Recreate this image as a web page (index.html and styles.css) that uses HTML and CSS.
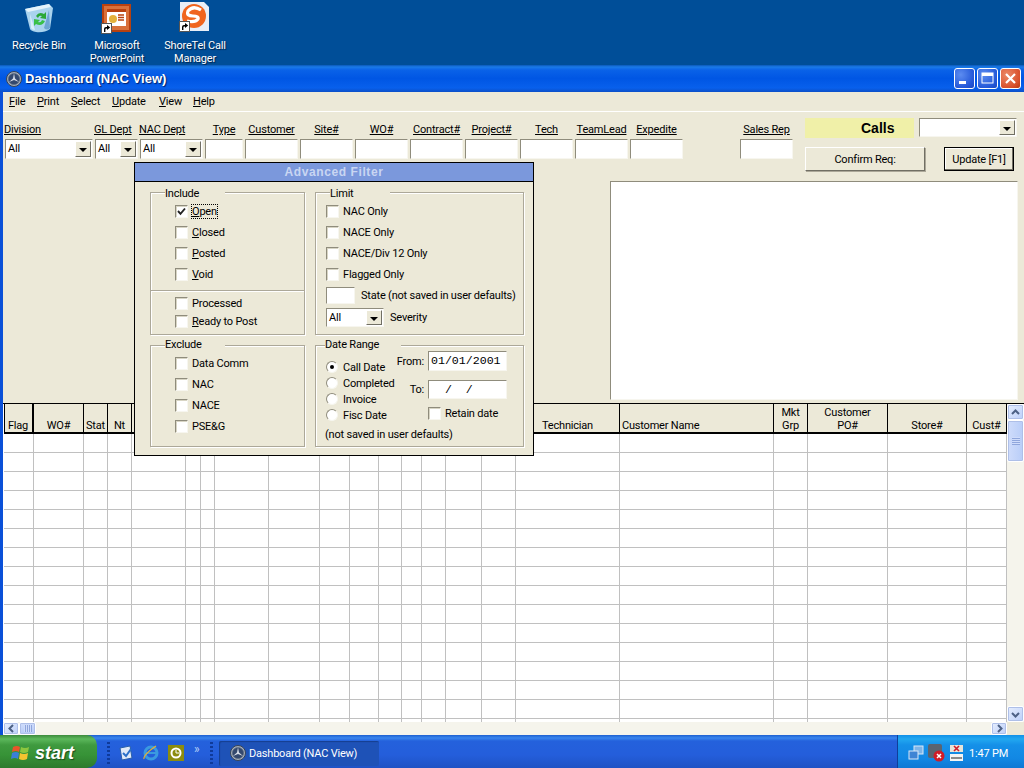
FILE: index.html
```html
<!DOCTYPE html>
<html lang="en">
<head>
    <meta charset="UTF-8">
    <meta name="viewport" content="width=device-width, initial-scale=1.0">
    <title>Dashboard (NAC View)</title>
    <link rel="stylesheet" href="styles.css">
</head>
<body>

    <svg class="defs" width="0" height="0">
        <symbol id="star" viewBox="0 0 16 16">
            <circle cx="8" cy="8" r="7.5" fill="#a4aebc" stroke="#364254"/>
            <circle cx="8" cy="8" r="5.6" fill="#33486e" stroke="#566478" stroke-width=".6"/>
            <path d="M8 2.2 L9 7.4 L13 11 L8 9.1 L3 11 L7 7.4 Z" fill="#d4dbe6"/>
        </symbol>
        <symbol id="shortcut" viewBox="0 0 11 11">
            <rect width="11" height="11" fill="#fff"/>
            <rect x=".5" y=".5" width="10" height="10" fill="none" stroke="#555"/>
            <path d="M3 9 V6 Q3 4 5 4 H6 V2 L9.2 4.6 L6 7 V5.4 H5.2 Q4.4 5.4 4.4 6.4 V9 Z" fill="#000"/>
        </symbol>
    </svg>

    <!-- desktop icons -->
    <div class="desk-icon icon-bin">
        <svg width="30" height="32" viewBox="0 0 30 32">
            <path d="M1 7 L25 2 L29 6 L26 27 Q20 31 12 30 Q7 29 6 27 Z" fill="#a9d3ee"/>
            <path d="M1 7 L25 2 L27 5 L4 10 Z" fill="#e4f3fb"/>
            <path d="M6 12 L11 28 Q8 28 7 26 Z" fill="#d8eef9"/>
            <path d="M20 26 L25 8 L26 26 Q23 29 20 26 Z" fill="#6da5d4"/>
            <path d="M12 14 Q15 9 20 12 L22 10 L22 17 L16 16 L18 14 Q15 13 14 16 Z" fill="#2aa838"/>
            <path d="M21 19 Q18 25 12 22 L10 24 L10 17 L16 18 L14 20 Q17 21 18 18 Z" fill="#38c048"/>
        </svg>
        <span>Recycle Bin</span>
    </div>
    <div class="desk-icon icon-ppt">
        <span class="icon-box">
            <svg width="30" height="30" viewBox="0 0 30 30">
                <rect width="29" height="28" x="0" y="0" fill="#b8410f"/>
                <rect width="25" height="24" x="2" y="2" fill="#d8703a"/>
                <rect width="19" height="17" x="5" y="5" fill="#fff"/>
                <rect width="19" height="3" x="5" y="5" fill="#b8410f"/>
                <circle cx="11" cy="15" r="4" fill="#e4b23c"/>
                <path d="M16 11 h6 M16 13.5 h6 M16 16 h6" stroke="#b8410f" stroke-width="1.4"/>
            </svg>
            <svg class="arrow" width="11" height="11"><use href="#shortcut"/></svg>
        </span>
        <span>Microsoft PowerPoint</span>
    </div>
    <div class="desk-icon icon-shore">
        <span class="icon-box">
            <svg width="30" height="30" viewBox="0 0 30 30">
                <path d="M0 0 H24 L29 5 V29 H0 Z" fill="#e8eef8"/>
                <circle cx="14" cy="14" r="12" fill="#f0641e"/>
                <path d="M21 8 Q13 3 8 9 Q6 14 13 14 Q19 14 18 17 Q15 21 7 19" fill="none" stroke="#fff" stroke-width="3.2"/>
            </svg>
            <svg class="arrow" width="11" height="11"><use href="#shortcut"/></svg>
        </span>
        <span>ShoreTel Call Manager</span>
    </div>

    <!-- main window -->
    <div class="window">
        <div class="titlebar">
            <svg class="title-icon" width="16" height="16"><use href="#star"/></svg>
            <span class="title-text">Dashboard (NAC View)</span>
            <div class="title-buttons">
                <span class="win-btn"><svg width="19" height="19" viewBox="0 0 19 19"><rect x="4" y="12" width="7" height="3" fill="#fff"/></svg></span>
                <span class="win-btn"><svg width="19" height="19" viewBox="0 0 19 19"><rect x="4" y="4" width="11" height="10" fill="none" stroke="#fff"/><rect x="4" y="4" width="11" height="3" fill="#fff"/></svg></span>
                <span class="win-btn win-close"><svg width="19" height="19" viewBox="0 0 19 19"><path d="M5 5 L14 14 M14 5 L5 14" stroke="#fff" stroke-width="2.2"/></svg></span>
            </div>
        </div>

        <div class="menubar">
            <span class="m-file"><u>F</u>ile</span>
            <span class="m-print"><u>P</u>rint</span>
            <span class="m-select"><u>S</u>elect</span>
            <span class="m-update"><u>U</u>pdate</span>
            <span class="m-view"><u>V</u>iew</span>
            <span><u>H</u>elp</span>
        </div>

        <div class="toolbar">
            <div class="fields">
                <div class="field w-division">
                    <label class="left">Division</label>
                    <span class="combo"><span class="combo-text">All</span><span class="drop"></span></span>
                </div>
                <div class="field w-gl">
                    <label class="left">GL Dept</label>
                    <span class="combo"><span class="combo-text">All</span><span class="drop"></span></span>
                </div>
                <div class="field w-nac">
                    <label class="left">NAC Dept</label>
                    <span class="combo"><span class="combo-text">All</span><span class="drop"></span></span>
                </div>
                <div class="field w-type"><label>Type</label><span class="textbox"></span></div>
                <div class="field"><label>Customer</label><span class="textbox"></span></div>
                <div class="field"><label>Site#</label><span class="textbox"></span></div>
                <div class="field"><label>WO#</label><span class="textbox"></span></div>
                <div class="field"><label>Contract#</label><span class="textbox"></span></div>
                <div class="field"><label>Project#</label><span class="textbox"></span></div>
                <div class="field"><label>Tech</label><span class="textbox"></span></div>
                <div class="field"><label>TeamLead</label><span class="textbox"></span></div>
                <div class="field"><label>Expedite</label><span class="textbox"></span></div>
                <div class="field sales"><label>Sales Rep</label><span class="textbox"></span></div>
            </div>
            <div class="side">
                <div class="side-row">
                    <div class="calls">Calls</div>
                    <span class="combo combo-calls"><span class="combo-text"></span><span class="drop"></span></span>
                </div>
                <div class="side-row side-buttons">
                    <button class="btn btn-confirm">Confirm Req:</button>
                    <button class="btn btn-update">Update [F1]</button>
                </div>
            </div>
        </div>

        <div class="memo-row">
            <div class="memo"></div>
        </div>

        <div class="grid-area">
            <div class="grid-wrap">
                <table class="grid">
                    <colgroup>
                        <col width="30"><col width="50"><col width="24"><col width="24"><col width="54"><col width="15"><col width="14"><col width="54"><col width="51"><col width="30"><col width="29"><col width="23"><col width="20"><col width="24"><col width="36"><col width="34"><col width="104"><col width="154"><col width="34"><col width="80"><col width="79"><col width="40">
                    </colgroup>
                    <thead>
                        <tr>
                            <th class="thick">Flag</th><th>WO#</th><th>Stat</th><th>Nt</th><th></th><th></th><th></th><th></th><th></th><th></th><th></th><th></th><th></th><th></th><th></th><th></th><th>Technician</th><th class="to-left">Customer Name</th><th>Mkt<br>Grp</th><th>Customer<br>PO#</th><th>Store#</th><th>Cust#</th>
                        </tr>
                    </thead>
                    <tbody>
                        <tr><td></td><td></td><td></td><td></td><td></td><td></td><td></td><td></td><td></td><td></td><td></td><td></td><td></td><td></td><td></td><td></td><td></td><td></td><td></td><td></td><td></td><td></td></tr>
                        <tr><td></td><td></td><td></td><td></td><td></td><td></td><td></td><td></td><td></td><td></td><td></td><td></td><td></td><td></td><td></td><td></td><td></td><td></td><td></td><td></td><td></td><td></td></tr>
                        <tr><td></td><td></td><td></td><td></td><td></td><td></td><td></td><td></td><td></td><td></td><td></td><td></td><td></td><td></td><td></td><td></td><td></td><td></td><td></td><td></td><td></td><td></td></tr>
                        <tr><td></td><td></td><td></td><td></td><td></td><td></td><td></td><td></td><td></td><td></td><td></td><td></td><td></td><td></td><td></td><td></td><td></td><td></td><td></td><td></td><td></td><td></td></tr>
                        <tr><td></td><td></td><td></td><td></td><td></td><td></td><td></td><td></td><td></td><td></td><td></td><td></td><td></td><td></td><td></td><td></td><td></td><td></td><td></td><td></td><td></td><td></td></tr>
                        <tr><td></td><td></td><td></td><td></td><td></td><td></td><td></td><td></td><td></td><td></td><td></td><td></td><td></td><td></td><td></td><td></td><td></td><td></td><td></td><td></td><td></td><td></td></tr>
                        <tr><td></td><td></td><td></td><td></td><td></td><td></td><td></td><td></td><td></td><td></td><td></td><td></td><td></td><td></td><td></td><td></td><td></td><td></td><td></td><td></td><td></td><td></td></tr>
                        <tr><td></td><td></td><td></td><td></td><td></td><td></td><td></td><td></td><td></td><td></td><td></td><td></td><td></td><td></td><td></td><td></td><td></td><td></td><td></td><td></td><td></td><td></td></tr>
                        <tr><td></td><td></td><td></td><td></td><td></td><td></td><td></td><td></td><td></td><td></td><td></td><td></td><td></td><td></td><td></td><td></td><td></td><td></td><td></td><td></td><td></td><td></td></tr>
                        <tr><td></td><td></td><td></td><td></td><td></td><td></td><td></td><td></td><td></td><td></td><td></td><td></td><td></td><td></td><td></td><td></td><td></td><td></td><td></td><td></td><td></td><td></td></tr>
                        <tr><td></td><td></td><td></td><td></td><td></td><td></td><td></td><td></td><td></td><td></td><td></td><td></td><td></td><td></td><td></td><td></td><td></td><td></td><td></td><td></td><td></td><td></td></tr>
                        <tr><td></td><td></td><td></td><td></td><td></td><td></td><td></td><td></td><td></td><td></td><td></td><td></td><td></td><td></td><td></td><td></td><td></td><td></td><td></td><td></td><td></td><td></td></tr>
                        <tr><td></td><td></td><td></td><td></td><td></td><td></td><td></td><td></td><td></td><td></td><td></td><td></td><td></td><td></td><td></td><td></td><td></td><td></td><td></td><td></td><td></td><td></td></tr>
                        <tr><td></td><td></td><td></td><td></td><td></td><td></td><td></td><td></td><td></td><td></td><td></td><td></td><td></td><td></td><td></td><td></td><td></td><td></td><td></td><td></td><td></td><td></td></tr>
                        <tr><td></td><td></td><td></td><td></td><td></td><td></td><td></td><td></td><td></td><td></td><td></td><td></td><td></td><td></td><td></td><td></td><td></td><td></td><td></td><td></td><td></td><td></td></tr>
                        <tr><td></td><td></td><td></td><td></td><td></td><td></td><td></td><td></td><td></td><td></td><td></td><td></td><td></td><td></td><td></td><td></td><td></td><td></td><td></td><td></td><td></td><td></td></tr>
                    </tbody>
                </table>
            </div>
            <div class="vscroll">
                <span class="sb-btn"><svg width="9" height="7" viewBox="0 0 9 7"><path d="M1 5 L4.5 1.5 L8 5" fill="none" stroke="#4d6185" stroke-width="2"/></svg></span>
                <span class="sb-thumb sb-thumb-v"></span>
                <span class="sb-track"></span>
                <span class="sb-btn"><svg width="9" height="7" viewBox="0 0 9 7"><path d="M1 2 L4.5 5.5 L8 2" fill="none" stroke="#4d6185" stroke-width="2"/></svg></span>
            </div>
        </div>

        <div class="hscroll">
            <span class="sb-btn"><svg width="7" height="9" viewBox="0 0 7 9"><path d="M5 1 L1.5 4.5 L5 8" fill="none" stroke="#4d6185" stroke-width="2"/></svg></span>
            <span class="sb-thumb sb-thumb-h"></span>
            <span class="sb-track"></span>
            <span class="sb-btn"><svg width="7" height="9" viewBox="0 0 7 9"><path d="M2 1 L5.5 4.5 L2 8" fill="none" stroke="#4d6185" stroke-width="2"/></svg></span>
            <span class="sb-corner"></span>
        </div>

        <!-- advanced filter dialog, sits over the grid -->
        <div class="dialog">
            <div class="dialog-title">Advanced Filter</div>
            <div class="dialog-body">
                <fieldset class="group">
                    <legend class="legend-wide">Include</legend>
                    <div class="rows rows-left">
                        <div class="row"><span class="check"><svg width="9" height="9" viewBox="0 0 9 9"><path d="M1 4 L3.5 6.8 L8 1.5" fill="none" stroke="#222" stroke-width="1.9"/></svg></span><span class="focus"><u>O</u>pen</span></div>
                        <div class="row"><span class="check"></span><span><u>C</u>losed</span></div>
                        <div class="row"><span class="check"></span><span><u>P</u>osted</span></div>
                        <div class="row"><span class="check"></span><span><u>V</u>oid</span></div>
                    </div>
                    <div class="divider"></div>
                    <div class="rows rows-left">
                        <div class="row row-short"><span class="check"></span><span>Processed</span></div>
                        <div class="row row-short"><span class="check"></span><span><u>R</u>eady to Post</span></div>
                    </div>
                </fieldset>

                <fieldset class="group">
                    <legend class="legend-wide legend-limit">Limit</legend>
                    <div class="rows rows-right">
                        <div class="row"><span class="check"></span><span>NAC Only</span></div>
                        <div class="row"><span class="check"></span><span>NACE Only</span></div>
                        <div class="row"><span class="check"></span><span>NACE/Div 12 Only</span></div>
                        <div class="row"><span class="check"></span><span>Flagged Only</span></div>
                        <div class="row row-state"><span class="textbox state-box"></span><span>State (not saved in user defaults)</span></div>
                        <div class="row row-severity"><span class="combo combo-sev"><span class="combo-text">All</span><span class="drop"></span></span><span>Severity</span></div>
                    </div>
                </fieldset>

                <fieldset class="group group-low group-exclude">
                    <legend class="legend-wide">Exclude</legend>
                    <div class="rows rows-left">
                        <div class="row"><span class="check"></span><span>Data Comm</span></div>
                        <div class="row"><span class="check"></span><span>NAC</span></div>
                        <div class="row"><span class="check"></span><span>NACE</span></div>
                        <div class="row"><span class="check"></span><span>PSE&amp;G</span></div>
                    </div>
                </fieldset>

                <fieldset class="group group-low">
                    <legend class="legend-date">Date Range</legend>
                    <div class="date-top">
                        <div class="radios">
                            <div class="radio-row"><span class="radio on"></span><span>Call Date</span></div>
                            <div class="radio-row"><span class="radio"></span><span>Completed</span></div>
                            <div class="radio-row"><span class="radio"></span><span>Invoice</span></div>
                            <div class="radio-row"><span class="radio"></span><span>Fisc Date</span></div>
                        </div>
                        <div class="dates">
                            <div class="date-row"><span>From:</span><span class="textbox date-box">01/01/2001</span></div>
                            <div class="date-row date-to"><span>To:</span><span class="textbox date-box">  /  /</span></div>
                            <div class="row retain"><span class="check"></span><span>Retain date</span></div>
                        </div>
                    </div>
                    <div class="date-note">(not saved in user defaults)</div>
                </fieldset>
            </div>
        </div>
    </div>

    <!-- taskbar -->
    <div class="taskbar">
        <div class="start">
            <svg width="20" height="20" viewBox="0 0 20 20">
                <path d="M2 4 Q6 2 9 4 L8 9 Q5 7 1 9 Z" fill="#e8552a"/>
                <path d="M10 4 Q14 6 18 4 L17 9 Q13 11 9 9 Z" fill="#8cc63f"/>
                <path d="M1 10 Q5 8 8 10 L7 16 Q4 14 0 16 Z" fill="#3a7fd8"/>
                <path d="M9 10 Q13 12 17 10 L16 16 Q12 18 8 16 Z" fill="#f4c430"/>
            </svg>
            <span class="start-text">start</span>
        </div>
        <span class="grip"></span>
        <div class="quick">
            <svg width="16" height="16" viewBox="0 0 16 16"><path d="M2 3 L12 1 L14 13 L4 15 Z" fill="#dfeaf8" stroke="#2a5fa8"/><path d="M5 8 L8 11 L13 4" fill="none" stroke="#2a70c8" stroke-width="2"/></svg>
            <svg width="18" height="18" viewBox="0 0 18 18"><ellipse cx="9" cy="9" rx="6" ry="6" fill="none" stroke="#3a9ae0" stroke-width="3"/><path d="M4 9 H15" stroke="#3a9ae0" stroke-width="2"/><path d="M2 15 Q1 11 14 2" fill="none" stroke="#e8b030" stroke-width="1.2"/></svg>
            <svg width="16" height="16" viewBox="0 0 16 16"><rect width="16" height="16" fill="#8c8c10"/><circle cx="8" cy="8" r="4.5" fill="none" stroke="#fff" stroke-width="2"/><path d="M8 5 V8 H11" fill="none" stroke="#fff"/></svg>
        </div>
        <span class="chevrons">»</span>
        <span class="grip"></span>
        <div class="task">
            <svg width="16" height="16"><use href="#star"/></svg>
            <span>Dashboard (NAC View)</span>
        </div>
        <div class="tray">
            <svg width="16" height="16" viewBox="0 0 16 16"><rect x="6" y="1" width="9" height="8" fill="#7db4e8" stroke="#d8e8f8"/><rect x="1" y="6" width="9" height="8" fill="#3e84d4" stroke="#d8e8f8"/></svg>
            <svg width="18" height="18" viewBox="0 0 18 18"><rect x="0" y="0" width="14" height="14" rx="2" fill="#5a6470"/><circle cx="11" cy="12" r="5.5" fill="#d01c28"/><path d="M9 10 L13 14 M13 10 L9 14" stroke="#fff" stroke-width="1.5"/></svg>
            <svg width="13" height="16" viewBox="0 0 13 16"><rect x="0" y="0" width="13" height="7" fill="#e8e4d8"/><path d="M4 1 L9 6 M9 1 L4 6" stroke="#d01c28" stroke-width="1.6"/><rect x="0" y="9" width="13" height="7" fill="#f4f4f4"/><path d="M1 13 H12" stroke="#222"/></svg>
            <span class="clock">1:47 PM</span>
        </div>
    </div>

</body>
</html>
```

FILE: styles.css
```css
* {
    box-sizing: border-box;
}
html, body {
    margin: 0;
    height: 100%;
}
body {
    position: relative;
    width: 1024px;
    height: 768px;
    overflow: hidden;
    background-color: #004e98;
    font-family: Roboto, "Liberation Sans", Arial, sans-serif;
    font-size: 11px;
    letter-spacing: -.2px;
    line-height: 13px;
    color: #000;
}
.defs {
    position: absolute;
}

/* desktop */
.desk-icon {
    position: absolute;
    top: 2px;
    width: 78px;
    display: flex;
    flex-direction: column;
    align-items: center;
    color: #fff;
    text-align: center;
    text-shadow: 1px 1px 1px #00244a;
}
.desk-icon > span:last-child {
    margin-top: 5px;
}
.desk-icon svg {
    display: block;
}
.icon-bin {
    left: 0;
}
.icon-ppt {
    left: 78px;
}
.icon-shore {
    left: 156px;
}
.icon-box {
    position: relative;
    display: block;
    width: 30px;
    height: 32px;
    margin-top: 2px;
    margin-bottom: -2px;
}
.icon-box .arrow {
    position: absolute;
    left: -1px;
    bottom: 2px;
}
.icon-shore .icon-box {
    margin-top: 0;
    margin-bottom: 0;
}

/* window */
.window {
    position: absolute;
    left: 0;
    top: 65px;
    width: 1024px;
    height: 670px;
    display: flex;
    flex-direction: column;
    background-color: #ece9d8;
    border-left: 3px solid #0a50d8;
}
.titlebar {
    flex: none;
    height: 27px;
    margin-left: -3px;
    display: flex;
    align-items: center;
    padding-left: 6px;
    padding-right: 3px;
    background: linear-gradient(#0a58b8 0, #1a7ae8 2px, #0a62e8 5px, #0056e4 50%, #0860ec 85%, #0b4fc8 100%);
}
.title-icon {
    flex: none;
    margin-right: 3px;
}
.title-text {
    color: #fff;
    font-family: "Liberation Sans", Arial, sans-serif;
    font-weight: bold;
    font-size: 13px;
    letter-spacing: 0;
    text-shadow: 1px 1px 1px #00206a;
}
.title-buttons {
    margin-left: auto;
    display: flex;
    gap: 2px;
}
.win-btn {
    width: 21px;
    height: 21px;
    display: flex;
    align-items: center;
    justify-content: center;
    border: 1px solid #fff;
    border-radius: 3px;
    background: radial-gradient(circle at 30% 30%, #5c8cf0, #2458d8 70%, #1c48c0);
}
.win-close {
    background: radial-gradient(circle at 30% 30%, #ec8a68, #d8502c 70%, #b83810);
}
.menubar {
    flex: none;
    height: 20px;
    display: flex;
    align-items: center;
    padding-left: 6px;
    border-bottom: 1px solid #fff;
}
.menubar span {
    flex: none;
}
.m-file {
    width: 28px;
}
.m-print {
    width: 34px;
}
.m-select {
    width: 41px;
}
.m-update {
    width: 47px;
}
.m-view {
    width: 34px;
}
.toolbar {
    flex: none;
    height: 69px;
    display: flex;
}
.fields {
    display: flex;
    gap: 2px;
    padding-top: 11px;
    padding-left: 2px;
}
.field {
    width: 53px;
    display: flex;
    flex-direction: column;
    align-items: center;
}
.field label {
    height: 16px;
    white-space: nowrap;
    text-decoration: underline;
}
.field label.left {
    align-self: flex-start;
    margin-left: -1px;
}
.w-division {
    width: 88px;
}
.w-gl {
    width: 43px;
}
.w-nac {
    width: 63px;
}
.w-type {
    width: 38px;
}
.sales {
    margin-left: 55px;
}
.textbox {
    display: block;
    flex: none;
    width: 100%;
    height: 20px;
    background-color: #fff;
    border: 1px solid;
    border-color: #8f8c7c #f7f6ef #f7f6ef #8f8c7c;
}
.combo {
    display: flex;
    flex: none;
    width: 100%;
    height: 20px;
    background-color: #fff;
    border: 1px solid;
    border-color: #8f8c7c #f7f6ef #f7f6ef #8f8c7c;
}
.combo-text {
    flex: 1;
    padding-left: 2px;
    line-height: 18px;
}
.drop {
    flex: none;
    position: relative;
    width: 16px;
    margin: 1px;
    background-color: #ece9d8;
    border: 1px solid;
    border-color: #fff #716f64 #716f64 #fff;
}
.drop::after {
    content: "";
    position: absolute;
    left: 3px;
    top: 6px;
    border-left: 4px solid transparent;
    border-right: 4px solid transparent;
    border-top: 4px solid #000;
}
.side {
    margin-left: 12px;
    padding-top: 6px;
    width: 212px;
}
.side-row {
    display: flex;
    justify-content: space-between;
}
.calls {
    width: 109px;
    height: 20px;
    padding-left: 56px;
    background-color: #f0f0a8;
    font-family: "Liberation Sans", Arial, sans-serif;
    font-weight: bold;
    font-size: 14px;
    letter-spacing: 0;
    line-height: 20px;
}
.combo-calls {
    width: 98px;
    height: 19px;
}
.side-buttons {
    margin-top: 9px;
    padding-right: 3px;
}
.btn {
    height: 24px;
    padding: 0;
    font-family: inherit;
    font-size: 11px;
    letter-spacing: -.2px;
    color: #000;
    background-color: #ece9d8;
    border: 1px solid;
    border-color: #fff #716f64 #716f64 #fff;
}
.btn-confirm {
    width: 120px;
    box-shadow: 1px 1px 0 #aca899;
}
.btn-update {
    width: 70px;
    border: 1px solid #000;
    box-shadow: inset -1px -1px 0 #716f64, inset 1px 1px 0 #fff;
}
.memo-row {
    flex: none;
    height: 222px;
    display: flex;
    justify-content: flex-end;
    padding-right: 6px;
}
.memo {
    width: 408px;
    height: 219px;
    background-color: #fff;
    border: 1px solid;
    border-color: #8f8c7c #f7f6ef #f7f6ef #8f8c7c;
}

/* grid */
.grid-area {
    flex: 1;
    min-height: 0;
    display: flex;
    border-top: 1px solid #000;
}
.grid-wrap {
    flex: 1;
    min-width: 0;
    overflow: hidden;
    background-color: #fff;
}
.grid {
    table-layout: fixed;
    width: 1003px;
    margin-left: 1px;
    border-collapse: separate;
    border-spacing: 0;
}
.grid th {
    height: 30px;
    padding: 0;
    overflow: hidden;
    font-weight: normal;
    vertical-align: bottom;
    white-space: nowrap;
    background-color: #ece9d8;
    border-right: 1px solid #000;
    border-bottom: 2px solid #000;
}
.grid th.thick {
    border-right-width: 2px;
    box-shadow: inset 1px 0 0 #000;
}
.grid th.to-left {
    text-align: left;
    padding-left: 2px;
}
.grid td {
    height: 19px;
    padding: 0;
    border-right: 1px solid #c0c0c0;
    border-bottom: 1px solid #c0c0c0;
}

/* scrollbars */
.vscroll {
    flex: none;
    width: 17px;
    display: flex;
    flex-direction: column;
    background-color: #f5f4ec;
}
.hscroll {
    flex: none;
    height: 13px;
    display: flex;
    background-color: #f5f4ec;
}
.sb-btn {
    flex: none;
    width: 16px;
    height: 16px;
    display: flex;
    align-items: center;
    justify-content: center;
    background: linear-gradient(135deg, #e6eefe, #bccff9);
    border: 1px solid #fff;
    border-radius: 2px;
    box-shadow: 0 0 0 1px #aebfe8 inset;
}
.vscroll .sb-btn {
    width: 17px;
}
.hscroll .sb-btn {
    height: 13px;
}
.sb-track {
    flex: 1;
}
.sb-thumb {
    flex: none;
    background: linear-gradient(90deg, #cfdcfb, #b8cdf8);
    border: 1px solid #fff;
    border-radius: 2px;
    box-shadow: 0 0 0 1px #aebfe8 inset;
}
.sb-thumb-v {
    height: 42px;
    background-image: repeating-linear-gradient(#cfdcfb 0, #cfdcfb 1px, #8fa6dc 1px, #8fa6dc 2px), linear-gradient(90deg, #cfdcfb, #b8cdf8);
    background-size: 8px 8px, 100% 100%;
    background-repeat: no-repeat;
    background-position: center;
}
.sb-thumb-h {
    width: 17px;
    background-image: repeating-linear-gradient(90deg, #cfdcfb 0, #cfdcfb 1px, #8fa6dc 1px, #8fa6dc 2px), linear-gradient(#cfdcfb, #b8cdf8);
    background-size: 8px 7px, 100% 100%;
    background-repeat: no-repeat;
    background-position: center;
}
.sb-corner {
    flex: none;
    width: 17px;
    background-color: #ece9d8;
}

/* dialog */
.dialog {
    position: absolute;
    left: 131px;
    top: 97px;
    width: 400px;
    height: 294px;
    background-color: #ece9d8;
    border: 1px solid #000;
}
.dialog-title {
    height: 19px;
    background-color: #7b98dc;
    border-bottom: 1px solid #000;
    color: #c9d6f2;
    font-family: "Liberation Sans", Arial, sans-serif;
    font-size: 12px;
    font-weight: bold;
    letter-spacing: .6px;
    text-align: center;
    line-height: 18px;
}
.dialog-body {
    display: grid;
    grid-template-columns: 155px 209px;
    grid-template-rows: 149px 108px;
    column-gap: 10px;
    row-gap: 4px;
    padding: 4px 0 0 15px;
}
.group {
    margin: 0;
    padding: 0;
    min-width: 0;
    border: 1px solid #aca899;
    box-shadow: 1px 1px 0 #fff, inset 1px 1px 0 #fff;
}
.group legend {
    margin-left: 14px;
    padding: 0;
    height: 12px;
    line-height: 16px;
    background-color: #ece9d8;
}
.group-low legend {
    line-height: 12px;
}
.legend-wide {
    width: 60px;
}
.group .legend-limit {
    margin-left: 14px;
}
.group .legend-date {
    margin-left: 9px;
    width: 76px;
}
.rows-left {
    padding-left: 24px;
}
.rows-right {
    padding-left: 10px;
}
.rows {
    padding-top: 3px;
}
.group-exclude .rows {
    padding-top: 2px;
}
.row {
    height: 21px;
    display: flex;
    align-items: center;
    gap: 4px;
    white-space: nowrap;
}
.row-short {
    height: 18px;
}
.divider + .rows {
    padding-top: 2px;
}
.divider {
    height: 2px;
    margin-top: 5px;
    border-top: 1px solid #aca899;
    border-bottom: 1px solid #fff;
}
.row-state {
    height: 17px;
    margin-top: 2px;
    gap: 6px;
}
.state-box {
    width: 29px;
    height: 17px;
}
.row-severity {
    height: 19px;
    margin-top: 4px;
    gap: 6px;
}
.combo-sev {
    width: 58px;
    height: 19px;
}
.check {
    flex: none;
    width: 13px;
    height: 13px;
    display: flex;
    align-items: center;
    justify-content: center;
    background-color: #fff;
    border: 1px solid;
    border-color: #8f8c7c #f7f6ef #f7f6ef #8f8c7c;
    box-shadow: inset 1px 1px 0 #d8d5c4;
}
.focus {
    outline: 1px dotted #000;
}
.date-top {
    height: 77px;
    display: flex;
}
.radios {
    width: 72px;
    margin-left: 10px;
    padding-top: 8px;
}
.radio-row {
    height: 16px;
    display: flex;
    align-items: center;
    gap: 5px;
    white-space: nowrap;
}
.radio {
    position: relative;
    flex: none;
    width: 12px;
    height: 12px;
    border-radius: 50%;
    background-color: #fff;
    border: 1px solid;
    border-color: #8f8c7c #f7f6ef #f7f6ef #8f8c7c;
}
.radio.on::after {
    content: "";
    position: absolute;
    left: 3px;
    top: 3px;
    width: 4px;
    height: 4px;
    border-radius: 50%;
    background-color: #000;
}
.dates {
    width: 109px;
}
.date-row {
    display: flex;
    justify-content: flex-end;
    align-items: center;
    gap: 4px;
}
.date-to {
    margin-top: 9px;
}
.date-box {
    width: 79px;
    height: 20px;
    padding-left: 2px;
    font-family: "Liberation Mono", "Courier New", monospace;
    font-size: 11.6px;
    letter-spacing: 0;
    line-height: 17px;
    white-space: pre;
}
.date-to .date-box {
    height: 19px;
}
.retain {
    height: 18px;
    margin-top: 5px;
    padding-left: 30px;
}
.date-note {
    margin-left: 9px;
    white-space: nowrap;
}

/* taskbar */
.taskbar {
    position: absolute;
    left: 0;
    top: 735px;
    width: 1024px;
    height: 33px;
    display: flex;
    align-items: center;
    padding-top: 3px;
    background: linear-gradient(#1d5fd0 0, #3a86ee 3px, #2461dc 6px, #245edb 60%, #1f52c4 100%);
}
.start {
    flex: none;
    width: 97px;
    height: 33px;
    margin-top: -3px;
    display: flex;
    align-items: center;
    gap: 4px;
    padding-left: 11px;
    padding-top: 2px;
    border-radius: 0 10px 10px 0;
    background: linear-gradient(#3c8a3c 0, #5cb85c 4px, #3f9a3f 10px, #379337 60%, #2d7a2d 100%);
}
.start-text {
    color: #fff;
    font-family: "Liberation Sans", Arial, sans-serif;
    font-weight: bold;
    font-style: italic;
    font-size: 18px;
    letter-spacing: 0;
    line-height: 20px;
    text-shadow: 1px 1px 1px #1c4a1c;
}
.grip {
    flex: none;
    width: 3px;
    height: 23px;
    margin-left: 10px;
    background-image: repeating-linear-gradient(#0f3a9a 0, #0f3a9a 2px, transparent 2px, transparent 4px);
}
.quick {
    flex: none;
    display: flex;
    align-items: center;
    gap: 8px;
    margin-left: 8px;
    width: 66px;
}
.chevrons {
    flex: none;
    width: 12px;
    margin-left: 10px;
    margin-bottom: 8px;
    color: #b8d0f8;
    font-size: 12px;
}
.chevrons + .grip {
    margin-left: 4px;
}
.task {
    flex: none;
    width: 160px;
    height: 25px;
    margin-left: 6px;
    display: flex;
    align-items: center;
    gap: 3px;
    padding-left: 11px;
    color: #fff;
    background-color: #1e52b7;
    border-radius: 2px;
    box-shadow: inset 1px 1px 1px #163f90;
}
.tray {
    margin-left: auto;
    margin-top: -3px;
    padding-top: 3px;
    width: 127px;
    height: 33px;
    display: flex;
    align-items: center;
    padding-left: 10px;
    gap: 4px;
    color: #fff;
    background: linear-gradient(#1290e8 0, #22a8f0 4px, #1590e8 10px, #1288e4 70%, #0f78d4 100%);
    border-left: 1px solid #0f3f9a;
}
.clock {
    margin-left: 2px;
    white-space: nowrap;
}
```
